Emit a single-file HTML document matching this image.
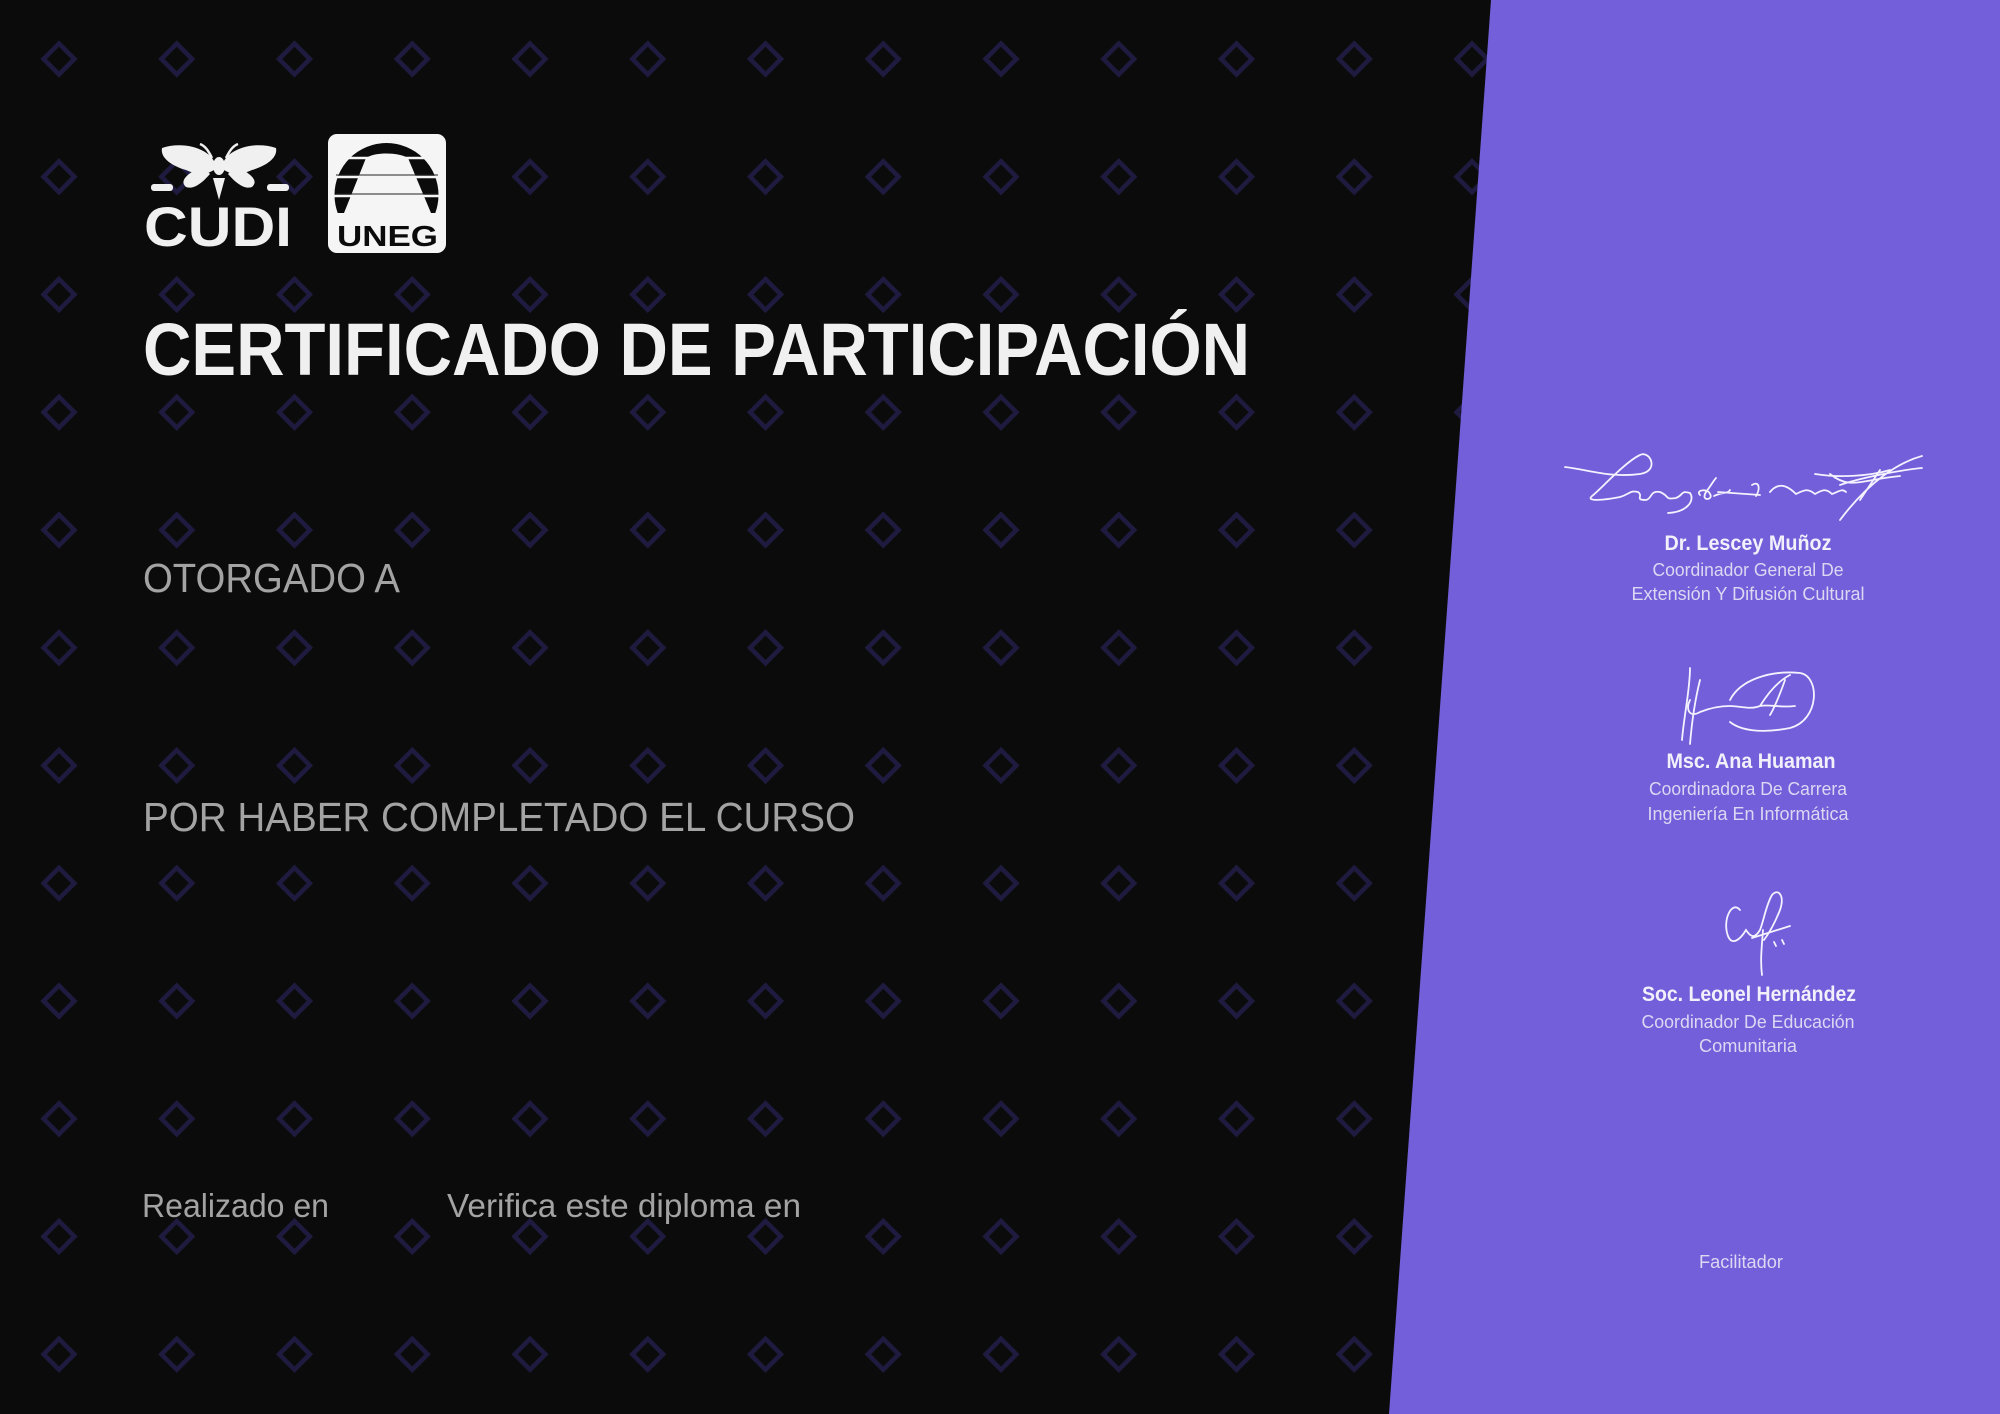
<!DOCTYPE html>
<html><head><meta charset="utf-8"><style>
html,body{margin:0;padding:0;background:#0b0b0b;width:2000px;height:1414px;overflow:hidden}
svg{display:block}
</style></head><body>
<svg width="2000" height="1414" viewBox="0 0 2000 1414" xmlns="http://www.w3.org/2000/svg">
<defs>
<pattern id="dia" x="0" y="0" width="117.75" height="117.75" patternUnits="userSpaceOnUse" patternTransform="translate(0.125 0.125)">
<path d="M58.875 43.5 L74.25 58.875 L58.875 74.25 L43.5 58.875 Z" fill="none" stroke="#1f1b40" stroke-width="4.5"/>
</pattern>
<clipPath id="dome"><rect x="328" y="130" width="120" height="83"/></clipPath>
</defs>
<rect width="2000" height="1414" fill="#0b0b0b"/>
<rect x="0" y="0" width="1500" height="1414" fill="url(#dia)"/>
<polygon points="1491,0 2000,0 2000,1414 1389,1414" fill="#725fd9"/>

<!-- CUDI logo -->
<g fill="#f0f0f0">
  <path d="M162 148 C185 140 215 150 216 168 C210 175 196 175 186 170 C172 166 160 158 162 148 Z"/>
  <path d="M276 148 C253 140 223 150 222 168 C228 175 242 175 252 170 C266 166 278 158 276 148 Z"/>
  <ellipse cx="219" cy="166" rx="6" ry="9"/>
  <path d="M213 178 L225 178 L219 200 Z"/>
  <path d="M203 166 C190 172 178 180 186 187 C194 190 203 182 210 174 Z"/>
  <path d="M235 166 C248 172 260 180 252 187 C244 190 235 182 228 174 Z"/>
  <path d="M212 158 C208 150 205 146 200 144" stroke="#f0f0f0" stroke-width="2.5" fill="none"/>
  <path d="M226 158 C230 150 233 146 238 144" stroke="#f0f0f0" stroke-width="2.5" fill="none"/>
  <rect x="151" y="184" width="22" height="7" rx="3"/>
  <rect x="267" y="184" width="22" height="7" rx="3"/>
</g>
<text x="144" y="246" font-family="Liberation Sans, sans-serif" font-weight="bold" font-size="56" fill="#f0f0f0" textLength="148" lengthAdjust="spacingAndGlyphs">CUDI</text>

<!-- UNEG logo -->
<rect x="328" y="134" width="118" height="119" rx="9" fill="#f5f5f5"/>
<circle cx="386.5" cy="195" r="52" fill="#0b0b0b" clip-path="url(#dome)"/>
<path d="M366 158 L408 158 L431 213 L344 213 Z" fill="#f5f5f5"/>
<path d="M366 158 C375 152 398 152 408 158 Z" fill="#f5f5f5"/>
<g stroke="#f5f5f5" stroke-width="2.5"><line x1="330" y1="158" x2="444" y2="158"/><line x1="330" y1="177" x2="444" y2="177"/><line x1="330" y1="196" x2="444" y2="196"/></g>
<g stroke="#222" stroke-width="1"><line x1="336" y1="175" x2="438" y2="175"/><line x1="336" y1="194" x2="438" y2="194"/></g>
<text x="337" y="246" font-family="Liberation Sans, sans-serif" font-weight="bold" font-size="29" fill="#0b0b0b" textLength="101" lengthAdjust="spacingAndGlyphs">UNEG</text>

<g font-family="Liberation Sans, sans-serif">
<text x="143" y="375" font-weight="bold" font-size="74" fill="#f0f0f0" textLength="1107" lengthAdjust="spacingAndGlyphs">CERTIFICADO DE PARTICIPACIÓN</text>
<text x="143" y="592" font-size="41" fill="#a3a3a3" textLength="257" lengthAdjust="spacingAndGlyphs">OTORGADO A</text>
<text x="143" y="831" font-size="41" fill="#a3a3a3" textLength="712" lengthAdjust="spacingAndGlyphs">POR HABER COMPLETADO EL CURSO</text>
<text x="142" y="1217" font-size="33" fill="#a3a3a3" textLength="187" lengthAdjust="spacingAndGlyphs">Realizado en</text>
<text x="447" y="1217" font-size="33" fill="#a3a3a3" textLength="354" lengthAdjust="spacingAndGlyphs">Verifica este diploma en</text>

<g text-anchor="middle">
<text x="1748" y="550" font-weight="bold" font-size="21" fill="#f2f0fb" textLength="167" lengthAdjust="spacingAndGlyphs">Dr. Lescey Muñoz</text>
<text x="1748" y="576" font-size="18" fill="#dcd8f3" textLength="191" lengthAdjust="spacingAndGlyphs">Coordinador General De</text>
<text x="1748" y="600" font-size="18" fill="#dcd8f3" textLength="233" lengthAdjust="spacingAndGlyphs">Extensión Y Difusión Cultural</text>

<text x="1751" y="768" font-weight="bold" font-size="21" fill="#f2f0fb" textLength="169" lengthAdjust="spacingAndGlyphs">Msc. Ana Huaman</text>
<text x="1748" y="795" font-size="18" fill="#dcd8f3" textLength="198" lengthAdjust="spacingAndGlyphs">Coordinadora De Carrera</text>
<text x="1748" y="820" font-size="18" fill="#dcd8f3" textLength="201" lengthAdjust="spacingAndGlyphs">Ingeniería En Informática</text>

<text x="1749" y="1001" font-weight="bold" font-size="21" fill="#f2f0fb" textLength="214" lengthAdjust="spacingAndGlyphs">Soc. Leonel Hernández</text>
<text x="1748" y="1028" font-size="18" fill="#dcd8f3" textLength="213" lengthAdjust="spacingAndGlyphs">Coordinador De Educación</text>
<text x="1748" y="1052" font-size="18" fill="#dcd8f3" textLength="98" lengthAdjust="spacingAndGlyphs">Comunitaria</text>

<text x="1741" y="1268" font-size="18" fill="#dcd8f3" textLength="84" lengthAdjust="spacingAndGlyphs">Facilitador</text>
</g>
</g>

<!-- signatures -->
<g fill="none" stroke="#f4f2ff" stroke-width="1.8" stroke-linecap="round">
<path d="M1565 467 C1590 470 1610 478 1640 474 C1660 471 1650 450 1640 455 C1625 462 1600 490 1592 496 C1585 502 1605 500 1620 497 C1630 494 1630 490 1638 492 C1644 496 1634 500 1646 500 C1652 499 1650 490 1660 492 C1670 496 1664 500 1676 498 C1684 495 1680 490 1690 493 C1695 500 1688 512 1668 513"/>
<path d="M1700 495 C1695 490 1708 488 1710 494 C1714 500 1700 502 1706 492 C1712 484 1714 480 1716 478 M1714 496 C1722 492 1728 494 1730 490 M1718 492 L1760 495 M1752 485 C1760 480 1760 490 1756 496 M1770 492 C1780 480 1790 488 1796 494 C1804 490 1808 488 1815 494 C1822 490 1826 488 1832 494 C1838 492 1842 488 1846 492"/>
<path d="M1815 474 C1840 478 1870 476 1890 470 M1830 474 C1850 490 1860 480 1900 476 M1840 485 C1860 478 1900 470 1922 468 M1922 456 C1900 462 1870 480 1840 520 M1880 470 L1860 500"/>
<path d="M1690 668 C1690 690 1684 715 1682 740 M1700 680 C1695 700 1692 720 1690 744 M1690 700 C1685 710 1690 718 1700 712 C1710 708 1720 706 1730 706 C1740 706 1750 710 1760 706 C1770 704 1780 708 1795 706 M1760 706 C1770 690 1780 680 1790 675 M1785 680 C1778 700 1772 712 1770 715 M1730 700 C1740 680 1770 670 1800 673 C1820 676 1820 720 1790 728 C1760 734 1740 730 1730 722"/>
<path d="M1740 910 C1732 900 1722 920 1728 936 C1732 946 1740 940 1746 930 C1750 936 1754 940 1760 930 C1764 920 1766 905 1772 895 C1778 888 1785 895 1780 910 C1776 920 1770 932 1764 940 M1752 938 L1790 926 M1763 930 C1762 945 1760 960 1762 975 M1774 942 L1776 946 M1782 940 L1784 944"/>
</g>
</svg>
</body></html>
